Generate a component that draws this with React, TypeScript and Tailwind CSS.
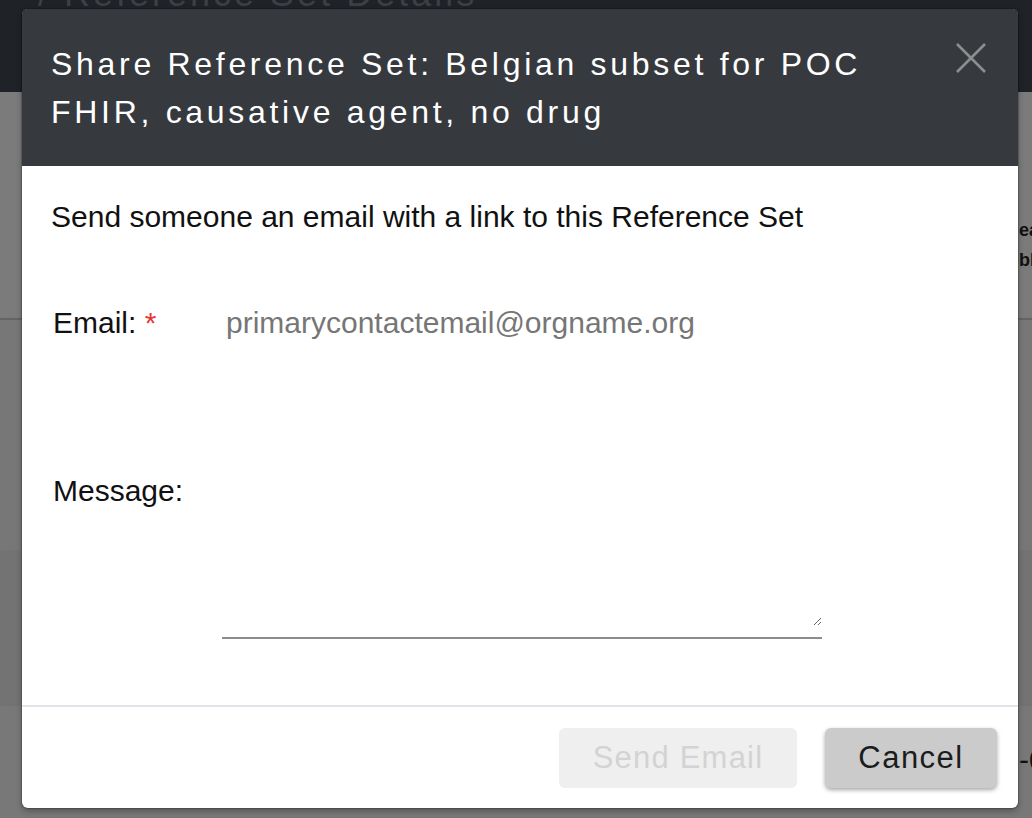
export default function App() {
  return (
    <div className="relative w-[1032px] h-[818px] overflow-hidden bg-[#777777] font-['Liberation_Sans',Arial,sans-serif]">
      {/* dimmed page behind the dialog */}
      <div className="h-[92px] bg-[#1f2227] overflow-hidden pl-[38px]">
        <div className="mt-[-24px] text-[36px] leading-none tracking-[3px] text-[#3c3f44] whitespace-nowrap">
          / Reference Set Details
        </div>
      </div>
      <div className="h-[228px] bg-[#7b7b7b] border-b-2 border-[#646464] pl-[1019px] pt-[123px] text-[18px] font-bold text-[#111] leading-[30px] whitespace-nowrap">
        <div>ea</div>
        <div>bl</div>
      </div>
      <div className="h-[230px] bg-[#777777]" />
      <div className="h-[156px] bg-[#737373]" />
      <div className="h-[112px] bg-[#787878] pl-[1019px] pt-[36px] text-[30px] leading-[36px] text-[#111] whitespace-nowrap">
        -0
      </div>

      {/* dialog */}
      <div className="absolute inset-0">
        <div
          role="dialog"
          className="ml-[22px] mt-[9px] w-[996px] h-[799px] flex flex-col bg-white rounded-[6px] shadow-[0_0_0_1px_rgba(0,0,0,0.18),0_3px_6px_rgba(0,0,0,0.3)]"
        >
          <div className="flex items-start bg-[#363a3f] rounded-t-[5px] pl-[29px] pr-[32px] pt-[31px] pb-[30px]">
            <h2 className="flex-1 text-[32px] leading-[48px] tracking-[3.7px] text-white font-normal">
              Share Reference Set: Belgian subset for POC FHIR, causative agent, no drug
            </h2>
            <button className="mt-[3px] ml-[20px] w-[30px] h-[30px] flex items-center justify-center" aria-label="Close">
              <svg width="30" height="30" viewBox="0 0 30 30" fill="none">
                <path d="M1 1 L29 29 M29 1 L1 29" stroke="#8e8e8e" strokeWidth="2.6" />
              </svg>
            </button>
          </div>

          <div className="flex-1 pl-[29px] pt-[33px] text-[30px] leading-[36px] text-[#111]">
            <p>Send someone an email with a link to this Reference Set</p>
            <div className="mt-[70px] flex">
              <label className="w-[171px] pl-[2px]">
                Email: <span className="text-[#e53935]">*</span>
              </label>
              <div className="pl-[4px] text-[#767676]">primarycontactemail@orgname.org</div>
            </div>
            <div className="mt-[132px] flex items-start">
              <label className="w-[171px] pl-[2px]">Message:</label>
              <div className="w-[600px] mt-[-3px]">
                <textarea className="block w-full h-[156px] resize-y outline-none bg-transparent text-[20px]" />
                <div className="mt-[11px] h-[2px] bg-[#8d8d8d]" />
              </div>
            </div>
          </div>

          <div className="border-t-2 border-[#e1e4e9] flex justify-end gap-[28px] pt-[21px] pb-[20px] pr-[21px]">
            <button
              disabled
              className="w-[238px] h-[60px] rounded-[6px] bg-[#efefef] text-[#d3d3d3] text-[31px] tracking-[1.2px]"
            >
              Send Email
            </button>
            <button className="w-[172px] h-[60px] rounded-[6px] bg-[#cbcbcb] text-[#1c1c1c] text-[31px] tracking-[1.5px] shadow-[0_2px_4px_rgba(0,0,0,0.35)]">
              Cancel
            </button>
          </div>
        </div>
      </div>
    </div>
  );
}
